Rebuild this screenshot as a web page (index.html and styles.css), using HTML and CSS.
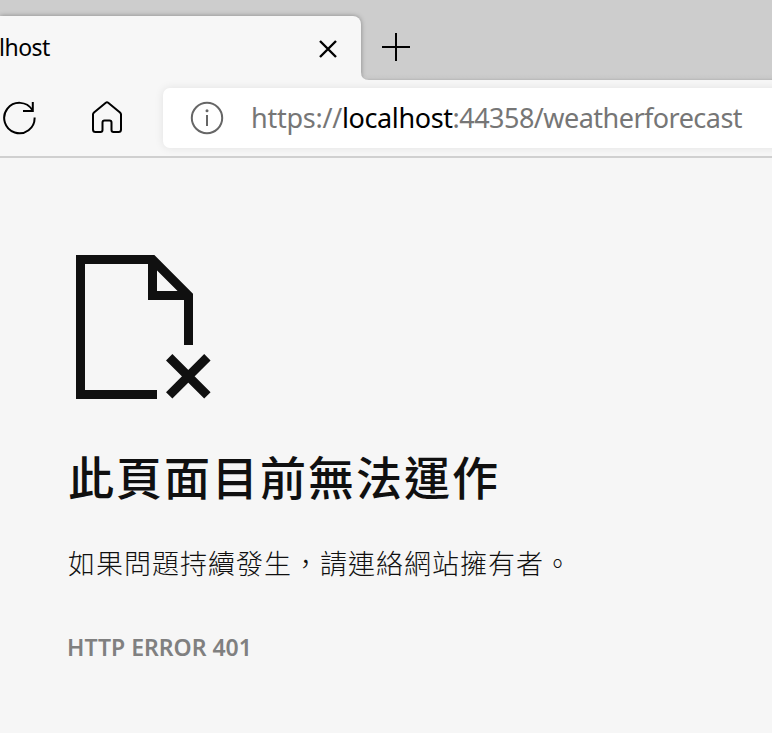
FILE: index.html
```html
<!DOCTYPE html>
<html lang="zh-Hant">
<head>
<meta charset="utf-8">
<title>localhost</title>
<link rel="stylesheet" href="styles.css">
</head>
<body>
<div class="tabs">
  <div class="tab">
    <span class="tab-title">lhost</span>
    <svg class="close" width="20" height="20" viewBox="0 0 20 20"><path d="M2 2L18 18M18 2L2 18"/></svg>
  </div>
  <svg class="curve" width="8" height="8" viewBox="0 0 8 8"><path d="M0 0Q0 8 8 8H0Z"/></svg>
  <svg class="plus" width="28" height="28" viewBox="0 0 28 28"><path d="M14 0V28M0 14H28"/></svg>
</div>
<div class="toolbar">
  <svg class="reload" width="36" height="36" viewBox="0 0 36 36"><path d="M32.6 17.5A15.2 15.2 0 1 1 30.3 10M30.8 2V11H21"/></svg>
  <svg class="home" width="32" height="34" viewBox="0 0 32 34"><path d="M2 13.5Q2 12.3 3 11.4L14.8 1.8Q16 .8 17.2 1.8L29 11.4Q30 12.3 30 13.5V28.5Q30 31 27.500 31H22.500Q20.500 31 20.500 29V21.500Q20.500 19.500 18.500 19.500H13.500Q11.500 19.500 11.500 21.500V29Q11.500 31 9.500 31H4.500Q2 31 2 28.500Z"/></svg>
  <div class="address">
    <svg class="info" width="34" height="34" viewBox="0 0 34 34"><circle cx="17" cy="17" r="15.2"/><path d="M17 14V25"/><circle class="dot" cx="17" cy="9.8" r="1.5"/></svg>
    <div class="url"><span class="scheme">https://</span><span class="host">localhost</span><span class="path">:44358/weatherforecast</span></div>
  </div>
</div>
<main>
  <svg class="page-icon" width="136" height="144" viewBox="0 0 136 144"><path d="M81 139.5H4.500V4.500H76.500L112.500 40.500V90M76.500 4.500V40.500H112.500M93.200 102.200L131.400 140.400M131.400 102.200L93.200 140.400"/></svg>
  <h1>此頁面目前無法運作</h1>
  <p class="message">如果問題持續發生，請連絡網站擁有者。</p>
  <p class="code">HTTP ERROR 401</p>
</main>
</body>
</html>
```
FILE: styles.css
```css
* { box-sizing: border-box; }
body {
  margin: 0;
  height: 733px;
  overflow: hidden;
  background: #f6f6f6;
  color: #101010;
  font-family: "Noto Sans", "Noto Sans CJK TC", sans-serif;
}
svg { flex: none; fill: none; stroke: #000; stroke-width: 2; }
.tabs {
  height: 80px;
  padding-top: 16px;
  display: flex;
  align-items: flex-start;
  overflow: hidden;
  background: linear-gradient(#cdcdcd 74px, #c8c8c8 78px, #b8b8b8 80px);
}
.tab {
  width: 361px;
  height: 64px;
  padding-right: 23px;
  display: flex;
  align-items: center;
  justify-content: space-between;
  background: #f7f7f7;
  border-radius: 0 8px 0 0;
  box-shadow: 0 0 5px rgba(0, 0, 0, .35);
}
.tab-title { margin: -2px 0 0 -1px; font-size: 23px; line-height: 32px; letter-spacing: -.5px; color: #000; white-space: nowrap; }
.close { margin-top: 2px; stroke-width: 2.4; }
.curve { align-self: flex-end; fill: #f7f7f7; stroke: none; }
.plus { margin: 17px 0 0 13px; }
.toolbar {
  height: 78px;
  padding-top: 8px;
  display: flex;
  align-items: flex-start;
  overflow: hidden;
  background: #f7f7f7;
  border-bottom: 2px solid #d0d0d0;
}
.reload { margin: 12px 0 0 2px; }
.home { margin: 13px 40px 0 53px; }
.address {
  flex: 1;
  height: 60px;
  margin-right: -20px;
  padding-left: 27px;
  display: flex;
  align-items: center;
  background: #fff;
  border-radius: 7px;
  box-shadow: 0 0 10px rgba(0, 0, 0, .09);
}
.info { stroke: #666; }
.info .dot { fill: #666; stroke: none; }
.url { margin-left: 27px; font-size: 27px; line-height: 40px; white-space: nowrap; color: #767676; }
.scheme { letter-spacing: -.25px; }
.host { letter-spacing: -.4px; color: #000; }
.path { letter-spacing: -.53px; }
main { padding: 97px 68px 0; }
.page-icon { display: block; margin-left: 8px; stroke: #101010; stroke-width: 9; }
h1 {
  margin: 42px 0 0;
  font-size: 46px;
  font-weight: 500;
  line-height: 68px;
  letter-spacing: 2px;
  white-space: nowrap;
  font-family: "Noto Sans CJK TC", sans-serif;
}
.message {
  margin: 34px 0 0;
  font-family: "Noto Sans CJK TC", sans-serif;
  font-size: 27px;
  font-weight: 300;
  line-height: 40px;
  letter-spacing: 1px;
  white-space: nowrap;
}
.code { margin: 48px 0 0 -1px; font-size: 23px; font-weight: 600; line-height: 32px; color: #808080; white-space: nowrap; }
```
